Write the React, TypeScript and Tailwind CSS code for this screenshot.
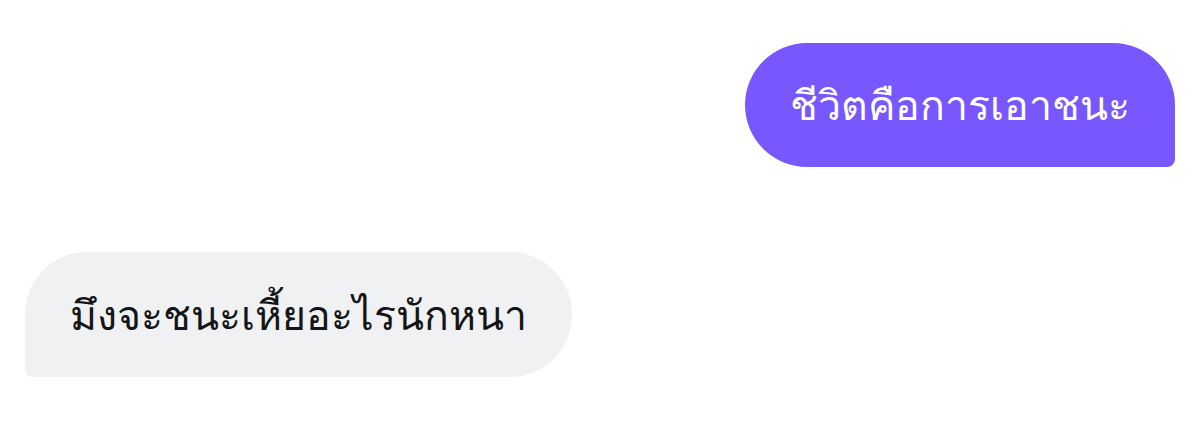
export default function App() {
  return (
    <div className="w-[1200px] h-[423px] bg-white px-[25px] pt-[43px] flex flex-col gap-[85px] font-['Noto_Sans',sans-serif]">
      <div className="self-end h-[124px] px-[45px] flex items-center bg-[#7857ff] text-white text-[41px] font-medium rounded-[62px] rounded-br-[8px]">
        ชีวิตคือการเอาชนะ
      </div>
      <div className="self-start h-[125px] px-[45px] flex items-center bg-[#eff1f2] text-[#131516] text-[41px] font-medium rounded-[62px] rounded-bl-[8px]">
        มึงจะชนะเหี้ยอะไรนักหนา
      </div>
    </div>
  )
}
